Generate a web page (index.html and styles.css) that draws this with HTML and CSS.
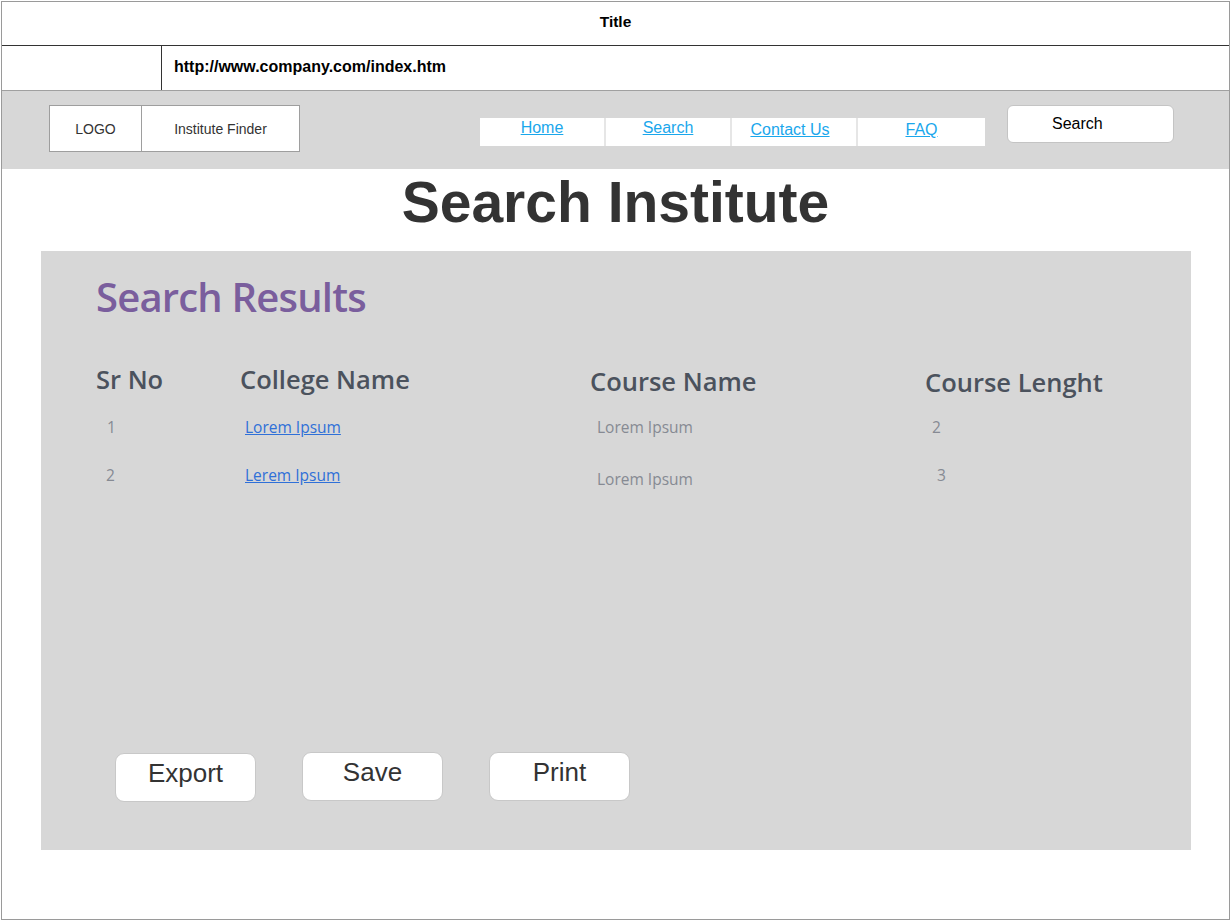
FILE: index.html
```html
<!DOCTYPE html>
<html>
<head>
<meta charset="utf-8">
<title>Search Institute</title>
<link rel="stylesheet" href="styles.css">
</head>
<body>
<div class="frame">
  <div class="titlebar">Title</div>
  <div class="urlbar">
    <div class="url-left"></div>
    <div class="url-text">http://www.company.com/index.htm</div>
  </div>
  <div class="nav">
    <div class="brand">
      <div class="logo">LOGO</div>
      <div class="site-name">Institute Finder</div>
    </div>
    <div class="links">
      <a class="link" href="#">Home</a>
      <a class="link" href="#">Search</a>
      <a class="link low shift" href="#">Contact Us</a>
      <a class="link low" href="#">FAQ</a>
    </div>
    <div class="search-btn">Search</div>
  </div>
  <h1 class="page-title">Search Institute</h1>
  <div class="panel">
    <h2 class="results-title">Search Results</h2>
    <div class="table">
      <div class="th">Sr No</div>
      <div class="th">College Name</div>
      <div class="th th-low">Course Name</div>
      <div class="th th-lower">Course Lenght</div>

      <div class="td first num">1</div>
      <div class="td first"><a class="college" href="#">Lorem Ipsum</a></div>
      <div class="td first course">Lorem Ipsum</div>
      <div class="td first num len">2</div>

      <div class="td num num2">2</div>
      <div class="td"><a class="college" href="#">Lerem Ipsum</a></div>
      <div class="td course down">Lorem Ipsum</div>
      <div class="td num len2">3</div>
    </div>
    <div class="actions">
      <div class="btn btn-first">Export</div>
      <div class="btn">Save</div>
      <div class="btn">Print</div>
    </div>
  </div>
</div>
</body>
</html>
```

FILE: styles.css
```css
* { box-sizing: border-box; }
html, body { margin: 0; padding: 0; background: #ffffff; }
body { font-family: "Liberation Sans", Arial, sans-serif; }

.frame {
  margin: 1px 0 0 1px;
  width: 1229px;
  height: 919px;
  border: 1px solid #9a9a9a;
  display: flex;
  flex-direction: column;
}

.titlebar {
  height: 44px;
  border-bottom: 1px solid #333333;
  display: flex;
  align-items: center;
  justify-content: center;
  font-weight: bold;
  font-size: 15.5px;
  color: #000;
  padding-bottom: 3px;
}

.urlbar {
  height: 45px;
  border-bottom: 1px solid #a0a0a0;
  display: flex;
}
.url-left {
  width: 160px;
  border-right: 1px solid #333333;
}
.url-text {
  padding-left: 12px;
  display: flex;
  align-items: center;
  font-weight: bold;
  font-size: 16px;
  color: #000;
  padding-bottom: 2px;
}

.nav {
  height: 78px;
  background: #d7d7d7;
  display: flex;
  align-items: flex-start;
  padding-top: 14px;
  padding-left: 47px;
}
.brand { display: flex; }
.logo, .site-name {
  height: 47px;
  background: #fff;
  border: 1px solid #9e9e9e;
  display: flex;
  align-items: center;
  justify-content: center;
  font-size: 14px;
  color: #333;
}
.logo { width: 93px; }
.site-name { width: 158px; border-left: none; }

.links {
  margin-left: 180px;
  margin-top: 13px;
  display: flex;
  background: #fff;
  height: 28px;
}
.link {
  width: 126px;
  text-align: center;
  font-size: 16px;
  line-height: 20px;
  color: #1aa7ec;
  text-decoration: underline;
  border-right: 2px solid #e6e6e6;
}
.link:last-child { border-right: none; width: 127px; }
.link.low { padding-top: 2px; }
.link.shift { padding-right: 8px; }

.search-btn {
  margin-left: 22px;
  width: 167px;
  height: 38px;
  background: #fff;
  border: 1px solid #c4c4c4;
  border-radius: 6px;
  font-size: 16px;
  color: #000;
  padding-left: 44px;
  line-height: 35px;
}

.page-title {
  margin: 1px 0 0 0;
  text-align: center;
  font-size: 57px;
  line-height: 64px;
  font-weight: bold;
  color: #333333;
}

.panel {
  margin: 17px 0 0 39px;
  width: 1150px;
  height: 599px;
  background: #d7d7d7;
  display: flex;
  flex-direction: column;
  padding-left: 55px;
}

.results-title {
  margin: 19px 0 0 0;
  font-family: "Open Sans", sans-serif;
  font-weight: 600;
  font-size: 40px;
  line-height: 54px;
  color: #7a5e9d;
  letter-spacing: -0.8px;
}

.table {
  margin-top: 38px;
  display: grid;
  grid-template-columns: 144px 350px 335px 200px;
  grid-auto-rows: auto;
  font-family: "Open Sans", sans-serif;
}
.th {
  font-weight: 600;
  font-size: 25.5px;
  line-height: 34px;
  color: #4b525d;
  letter-spacing: 0;
  height: 32px;
  white-space: nowrap;
}
.th-low { padding-top: 2px; }
.th-lower { padding-top: 3px; }

.td {
  font-size: 15.5px;
  line-height: 22px;
  height: 48px;
  color: #868a93;
}
.td.first { margin-top: 22px; }
.num { padding-left: 11px; }
.num2 { padding-left: 10px; }
.course { padding-left: 7px; }
.course.down { padding-top: 4px; }
.len { padding-left: 7px; }
.len2 { padding-left: 12px; }

.college {
  margin-left: 5px;
  color: #2f70d8;
  text-decoration: underline;
}

.actions {
  margin-top: auto;
  margin-bottom: 48px;
  display: flex;
  align-items: flex-start;
  padding-left: 19px;
}
.btn {
  width: 141px;
  height: 49px;
  background: #fff;
  border: 1px solid #c8c8c8;
  border-radius: 9px;
  font-size: 26px;
  color: #333;
  text-align: center;
  line-height: 38px;
  margin-right: 46px;
}
.btn-first { margin-top: 1px; }
```
